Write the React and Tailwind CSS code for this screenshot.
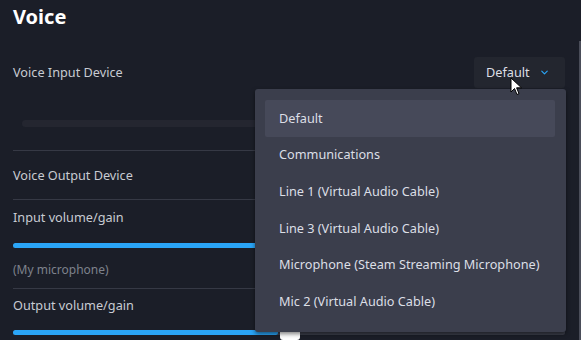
import { ChevronDown } from 'lucide-react'

const devices = [
  'Default',
  'Communications',
  'Line 1 (Virtual Audio Cable)',
  'Line 3 (Virtual Audio Cable)',
  'Microphone (Steam Streaming Microphone)',
  'Mic 2 (Virtual Audio Cable)'
]

const Divider = () => <div className="h-px bg-[#363945]" />

const Label = ({ children, className = '' }) => (
  <div className={`text-[12.7px] leading-none text-[#c8cbd2] ${className}`}>{children}</div>
)

const Slider = ({ value }) => (
  <div className="relative h-[5px] rounded-full bg-[#3b3e4a]">
    <div className="absolute left-0 top-0 h-full rounded-full bg-[#2aa5f7]" style={{ width: `${value}%` }} />
  </div>
)

const Cursor = () => (
  <svg className="absolute left-[510px] top-[77px]" width="13" height="19" viewBox="0 0 13 19">
    <path d="M1 1 L1 15 L4.5 11.5 L7 17.5 L9 16.6 L6.6 10.8 L11.5 10.8 Z" fill="#fff" stroke="#000" strokeWidth="1" strokeLinejoin="round" />
  </svg>
)

export default function App() {
  return (
    <div className="relative w-[581px] h-[340px] overflow-hidden bg-[#1b1e28] font-['Noto_Sans',sans-serif]">
      <div className="pl-[13px] pr-[16px]">
        <h1 className="pt-[5px] h-[40px] text-[20px] font-bold leading-[24px] text-white">Voice</h1>

        {/* Input device row */}
        <div className="mt-[17px] flex items-center justify-between">
          <Label>Voice Input Device</Label>
          <button className="flex h-[31px] w-[91px] items-center justify-between rounded-[3px] bg-[#23262f] pl-[12px] pr-[15px] text-[12.7px] text-[#dcdfe5]">
            <span>Default</span>
            <ChevronDown className="w-[11px] h-[11px] text-[#2aa5f7]" strokeWidth={2.5} />
          </button>
        </div>

        {/* mic level meter */}
        <div className="ml-[9px] mt-[32px] h-[7px] rounded-full bg-[#242630]" />

        <div className="mt-[23px]"><Divider /></div>

        <div className="h-[48px] flex items-center">
          <Label>Voice Output Device</Label>
        </div>
        <Divider />

        <Label className="mt-[11px]">Input volume/gain</Label>
        <div className="mt-[19px]"><Slider value={100} /></div>
        <div className="mt-[16px] text-[12px] leading-none text-[#7e828c]">(My microphone)</div>
        <div className="mt-[12px]"><Divider /></div>

        <Label className="mt-[10px]">Output volume/gain</Label>
        <div className="relative mt-[19px]">
          <Slider value={48} />
          <div className="absolute left-[267px] top-[-2px] h-[12px] w-[20px] rounded-[3px] bg-white" />
        </div>
      </div>

      {/* dropdown menu */}
      <div className="absolute left-[255px] top-[89px] w-[311px] h-[243px] rounded-[3px] bg-[#3b3e4c] pt-[11px] pl-[10px] pr-[11px] shadow-[0_2px_4px_rgba(0,0,0,0.5)]">
        {devices.map((d, i) => (
          <div
            key={d}
            className={`flex h-[36.6px] items-center rounded-[2px] pl-[14px] text-[12.7px] text-[#dcdfe6] ${i === 0 ? 'bg-[#464959]' : ''}`}
          >
            {d}
          </div>
        ))}
      </div>

      {/* scrollbar edge */}
      <div className="absolute right-0 top-[41px] bottom-0 w-[2px] bg-[#4a4d59]" />

      <Cursor />
    </div>
  )
}
